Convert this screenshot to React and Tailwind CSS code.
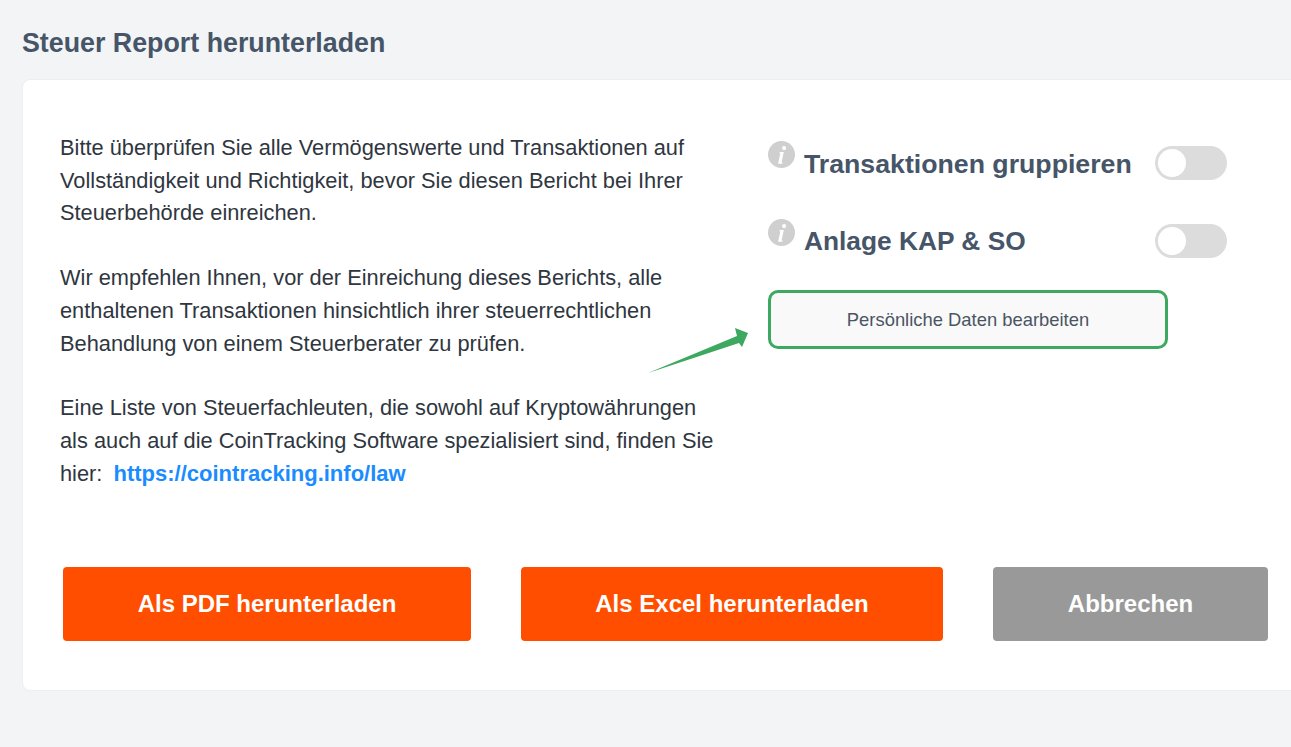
import React from 'react';

const InfoIcon = () => (
    <svg width="27" height="27" viewBox="0 0 26 26" className="shrink-0">
        <circle cx="13" cy="13" r="13" fill="#cfcfcf" />
        <circle cx="15.5" cy="6.8" r="2" fill="#ffffff" />
        <path d="M11.4 10.6h3.8l-2.2 10h1.2l-.3 1.2h-4.2l2.2-10h-1.1z" fill="#ffffff" />
    </svg>
);

const Toggle = () => (
    <div className="w-[72px] h-[34px] rounded-full bg-[#dcdcdc] p-[3px] ml-auto">
        <div className="w-[28px] h-[28px] rounded-full bg-white" />
    </div>
);

const ActionButton = ({ label, className }) => (
    <button className={`h-[74px] rounded-[4px] text-white font-bold text-[24px] flex items-center justify-center ${className}`}>
        {label}
    </button>
);

export default function App() {
    return (
        <div className="h-[747px] overflow-hidden bg-[#f3f4f6] pl-[22px] pt-[27px] font-['Liberation_Sans',Arial,sans-serif]">
            <h2 className="text-[26.8px] leading-[33px] font-bold text-[#465568]">Steuer Report herunterladen</h2>

            <div className="relative mt-[19px] w-[1300px] h-[612px] bg-white border border-[#eeeeee] rounded-l-[8px] pl-[37px] pt-[52px]">
                <div className="flex">
                    <div className="w-[668px] shrink-0 text-[21.8px] leading-[32.7px] text-[#2f3640]">
                        <p>
                            Bitte überprüfen Sie alle Vermögenswerte und Transaktionen auf<br />
                            Vollständigkeit und Richtigkeit, bevor Sie diesen Bericht bei Ihrer<br />
                            Steuerbehörde einreichen.
                        </p>
                        <p className="mt-[32px]">
                            Wir empfehlen Ihnen, vor der Einreichung dieses Berichts, alle<br />
                            enthaltenen Transaktionen hinsichtlich ihrer steuerrechtlichen<br />
                            Behandlung von einem Steuerberater zu prüfen.
                        </p>
                        <p className="mt-[32px]">
                            Eine Liste von Steuerfachleuten, die sowohl auf Kryptowährungen<br />
                            als auch auf die CoinTracking Software spezialisiert sind, finden Sie<br />
                            hier:&nbsp; <a className="font-bold text-[22px] text-[#1a8cff] -ml-[1px]">https://cointracking.info/law</a>
                        </p>
                    </div>

                    <div className="w-[400px] ml-[40px] mt-[9px] shrink-0">
                        <div className="flex items-center h-[38px] w-[459px] mt-[3px]">
                            <div className="self-start -mt-[3px]"><InfoIcon /></div>
                            <span className="ml-[9px] pt-[2px] text-[26.7px] font-bold text-[#465568]">Transaktionen gruppieren</span>
                            <Toggle />
                        </div>
                        <div className="flex items-center h-[38px] w-[459px] mt-[40px]">
                            <div className="self-start -mt-[3px]"><InfoIcon /></div>
                            <span className="ml-[9px] pt-[2px] text-[26.3px] font-bold text-[#465568]">Anlage KAP &amp; SO</span>
                            <Toggle />
                        </div>
                        <button className="mt-[30px] w-full h-[59px] rounded-[10px] border-[3px] border-[#3da85f] bg-[#f9f9f9] text-[18.4px] text-[#4a5564]">
                            Persönliche Daten bearbeiten
                        </button>
                    </div>
                </div>

                <div className="flex mt-[77px] ml-[3px] w-[1205px]">
                    <ActionButton label="Als PDF herunterladen" className="w-[408px] bg-[#ff4e00]" />
                    <ActionButton label="Als Excel herunterladen" className="w-[422px] ml-[50px] bg-[#ff4e00]" />
                    <ActionButton label="Abbrechen" className="w-[275px] ml-[50px] bg-[#999999]" />
                </div>

                <svg className="absolute left-[622px] top-[247px]" width="106" height="50" viewBox="0 0 106 50">
                    <path d="M3 46 L92 9 L90 1 L103 6 L97 20 L94 16 Z" fill="#3da85f" />
                </svg>
            </div>
        </div>
    );
}
